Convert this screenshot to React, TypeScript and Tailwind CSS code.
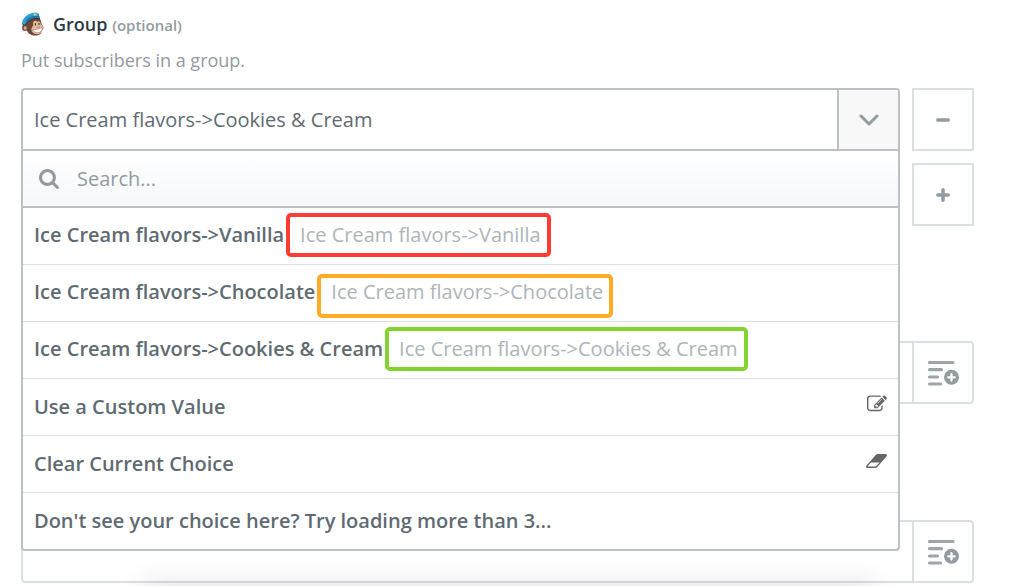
import React, { useState } from 'react';

const options = [
  { label: 'Ice Cream flavors->Vanilla', mark: 'border-[#ff3b34] -top-2 -bottom-2' },
  { label: 'Ice Cream flavors->Chocolate', mark: 'border-[#ffab23] -top-1 -bottom-3' },
  { label: 'Ice Cream flavors->Cookies & Cream', mark: 'border-[#83d42f] -top-2 -bottom-2' },
];

const MonkeyLogo: React.FC = () => (
  <svg viewBox="0 0 24 26" className="w-6 h-[26px]" aria-hidden="true">
    <path d="M5 10 C3.500 13 4 16 5.500 18 C6.500 22.500 10 24.800 14.500 24.500 C18.500 24.500 20.500 22.500 21 19.500 C22.800 18.500 23 15.500 21 14 C20.500 12 20 11 19.500 9 C19 6 17.500 5 15 5.500 Z" fill="#6b473b" />
    <path d="M12 11.500 C13.500 9 15.500 9.500 16.300 10.800 C18 9.500 19.500 10.500 19.600 12.700 C20 14.200 22.600 15 22 17 C21.500 19.500 21 21.500 18 23 C15 24 11 22.500 10.300 19 C10 16.500 12.500 15.500 12.200 13.500 Z" fill="#e6b798" />
    <ellipse cx="4" cy="16.800" rx="2.900" ry="3.200" fill="#6b473b" />
    <ellipse cx="4.200" cy="17" rx="1.600" ry="1.900" fill="#dba58a" />
    <path d="M1.200 12 C1.500 7 6.500 3 11.500 2 C14.500 1 16.500 1.500 18 3.200 L18.500 7 C12 6 7 8.500 4 14 Z" fill="#2ba0d8" />
    <path d="M6 8.500 C9 5.500 14 4.300 18.300 5 L18.500 7 C12 6 8 8 4 13.500 Z" fill="#20729f" />
    <path d="M1 12.500 L3.800 14.300 C7.500 9 12.500 7 18.500 7.800" stroke="#2c3640" strokeWidth="1" fill="none" />
    <path d="M12.500 2.500 L15.800 2.500 L15.500 4.500 L13.200 4.800 Z" fill="#d9cb83" />
    <path d="M11.800 18.500 C15.500 18.800 19 17.800 21.500 16.300 C21.500 19.500 19.500 21.700 16.500 21.700 C13.800 21.700 12 20.300 11.800 18.500 Z" fill="#fff" stroke="#8f6351" strokeWidth="0.500" />
    <path d="M14.500 12.500 V14 M18 12.200 V13.600" stroke="#41302b" strokeWidth="1.100" strokeLinecap="round" />
    <path d="M16.500 16.300 L18.500 16" stroke="#8f6351" strokeWidth="0.800" />
  </svg>
);

const SearchIcon: React.FC = () => (
  <svg viewBox="64 128 1664 1664" className="size-5 shrink-0" fill="#929b9f" aria-hidden="true">
    <path d="M1216 832q0-185-131.5-316.5t-316.5-131.5-316.5 131.5-131.5 316.5 131.5 316.5 316.5 131.5 316.5-131.5 131.5-316.5zm512 832q0 52-38 90t-90 38q-54 0-90-38l-343-342q-179 124-399 124-143 0-273.5-55.5t-225-150-150-225-55.5-273.5 55.5-273.5 150-225 225-150 273.5-55.5 273.5 55.5 225 150 150 225 55.5 273.5q0 220-124 399l343 343q37 37 37 90z" />
  </svg>
);

const EditIcon: React.FC = () => (
  <svg viewBox="0 0 1792 1792" className="size-5" fill="#666" aria-hidden="true">
    <path d="M888 1184l116-116-152-152-116 116v56h96v96h56zm440-720q-16-16-33 1l-350 350q-17 17-1 33t33-1l350-350q17-17 1-33zm80 594v190q0 119-84.5 203.5t-203.5 84.5h-832q-119 0-203.5-84.5t-84.5-203.5v-832q0-119 84.5-203.5t203.5-84.5h832q63 0 117 25 15 7 18 23 3 17-9 29l-49 49q-14 14-32 8-23-6-45-6h-832q-66 0-113 47t-47 113v832q0 66 47 113t113 47h832q66 0 113-47t47-113v-126q0-13 9-22l64-64q15-15 35-7t20 29zm-96-738l288 288-672 672h-288v-288zm444 132l-92 92-288-288 92-92q28-28 68-28t68 28l152 152q28 28 28 68t-28 68z" />
  </svg>
);

const EraserIcon: React.FC = () => (
  <svg viewBox="64 0 1920 1792" className="w-[21px] h-5" fill="#666" aria-hidden="true">
    <path d="M960 1408l336-384h-768l-336 384h768zm1013-1077q15 34 9.5 71.5t-30.5 65.5l-896 1024q-38 44-96 44h-768q-38 0-69.5-20.5t-47.5-54.5q-15-34-9.5-71.5t30.5-65.5l896-1024q38-44 96-44h768q38 0 69.5 20.5t47.5 54.5z" />
  </svg>
);

const actions = [
  { label: 'Use a Custom Value', icon: <EditIcon /> },
  { label: 'Clear Current Choice', icon: <EraserIcon /> },
  { label: "Don't see your choice here? Try loading more than 3...", icon: null },
];

const InsertField: React.FC<{ name: string }> = ({ name }) => (
  <div className="flex h-[63px] rounded border-2 border-[#dadfe2] bg-white">
    <input type="text" aria-label={name} className="flex-1 min-w-0 px-3 text-xl outline-none" />
    <button type="button" aria-label="Insert a field" className="w-[60px] border-l-2 border-[#dadfe2] flex items-center justify-center">
      <svg viewBox="0 0 32 26" className="w-8 h-[26px]" aria-hidden="true">
        <path d="M2.500 2.500 H26 M2.500 9.700 H14.500 M2.500 17 H10.500 M2.500 24 H13.500" stroke="#9ca5a9" strokeWidth="3.200" strokeLinecap="round" />
        <circle cx="24.500" cy="17.300" r="7.500" fill="#929b9f" />
        <path d="M24.500 14 V20.600 M21.200 17.300 H27.800" stroke="#fff" strokeWidth="2.200" strokeLinecap="round" />
      </svg>
    </button>
  </div>
);

const App: React.FC = () => {
  const [value, setValue] = useState('Ice Cream flavors->Cookies & Cream');
  const [open, setOpen] = useState(true);

  return (
    <main className="relative overflow-hidden bg-white pl-[21px] pr-11 pt-2.5 pb-1 font-['Open_Sans',sans-serif] text-[#5f6b72]">
      <div className="flex items-center gap-2 h-7">
        <MonkeyLogo />
        <label htmlFor="group" className="text-lg leading-7 font-semibold text-[#2d3b42]">
          Group <span className="text-[15px] text-[#929b9f]">(optional)</span>
        </label>
      </div>
      <p className="mt-2 text-lg leading-7 text-[#929b9f]">Put subscribers in a group.</p>

      <div className="mt-3.5 flex items-start gap-3">
        <div className="relative flex-1">
          <div className="flex h-[63px] rounded-t border-2 border-[#bcc1c4] bg-white">
            <input
              id="group"
              role="combobox"
              aria-expanded={open}
              aria-controls="group-menu"
              value={value}
              onChange={(e) => setValue(e.target.value)}
              className="flex-1 min-w-0 px-[11px] text-xl outline-none"
            />
            <button
              type="button"
              aria-label="Toggle choices"
              onClick={() => setOpen(!open)}
              className="w-[61px] border-l-2 border-[#bcc1c4] bg-[#f8f8f8] flex items-center justify-center"
            >
              <svg viewBox="0 0 20 12" className="w-5 h-3" fill="none" stroke="#929b9f" strokeWidth="3" strokeLinecap="round" strokeLinejoin="round" aria-hidden="true">
                <path d="M2 2 L10 10 L18 2" />
              </svg>
            </button>
          </div>

          {open && (
            <div id="group-menu" className="absolute z-10 inset-x-0 top-full border-2 border-t-0 border-[#bcc1c4] rounded-b bg-white">
              <div className="flex items-center gap-[18px] h-[57px] px-4 border-b-2 border-[#bcc1c4] bg-linear-to-b from-white to-[#f5f7fa]">
                <SearchIcon />
                <input type="text" aria-label="Search choices" placeholder="Search..." className="flex-1 min-w-0 text-xl outline-none placeholder:text-[#929b9f]" />
              </div>
              <ul className="divide-y divide-[#dadfe2]">
                {options.map((o) => (
                  <li key={o.label}>
                    <button
                      type="button"
                      onClick={() => setValue(o.label)}
                      className="flex items-center gap-4 w-full h-14 px-[11px] pb-0.5 text-left text-xl whitespace-nowrap"
                    >
                      <span className="font-semibold">{o.label}</span>
                      <span className="relative text-[#adb5b9]">
                        {o.label}
                        <span className={`absolute -left-3.5 -right-2.5 border-4 rounded-[5px] ${o.mark}`} />
                      </span>
                    </button>
                  </li>
                ))}
                {actions.map((a) => (
                  <li key={a.label}>
                    <button type="button" className="flex items-center justify-between w-full h-14 px-[11px] text-left text-xl font-semibold">
                      {a.label}
                      <span className="pb-1.5">{a.icon}</span>
                    </button>
                  </li>
                ))}
              </ul>
            </div>
          )}
        </div>

        <div className="flex flex-col gap-3">
          <button type="button" aria-label="Remove" className="w-[62px] h-[63px] border-2 border-[#dadfe2] flex items-center justify-center">
            <svg viewBox="0 0 14 14" className="size-3.5" stroke="#929b9f" strokeWidth="3.500" strokeLinecap="round" aria-hidden="true">
              <path d="M1.800 7 H12.200" />
            </svg>
          </button>
          <button type="button" aria-label="Add" className="w-[62px] h-[63px] border-2 border-[#dadfe2] flex items-center justify-center">
            <svg viewBox="0 0 14 14" className="size-3.5" stroke="#929b9f" strokeWidth="3.500" strokeLinecap="round" aria-hidden="true">
              <path d="M1.800 7 H12.200 M7 1.800 V12.200" />
            </svg>
          </button>
        </div>
      </div>

      <div className="mt-[115px] flex flex-col gap-[116px]">
        <InsertField name="First field" />
        <InsertField name="Second field" />
      </div>

      {/* shadow cast from below the fold */}
      <div className="absolute inset-x-36 top-full h-10 shadow-[0_0_32px_rgba(0,0,0,0.14)]" />
    </main>
  );
};

export default App;
